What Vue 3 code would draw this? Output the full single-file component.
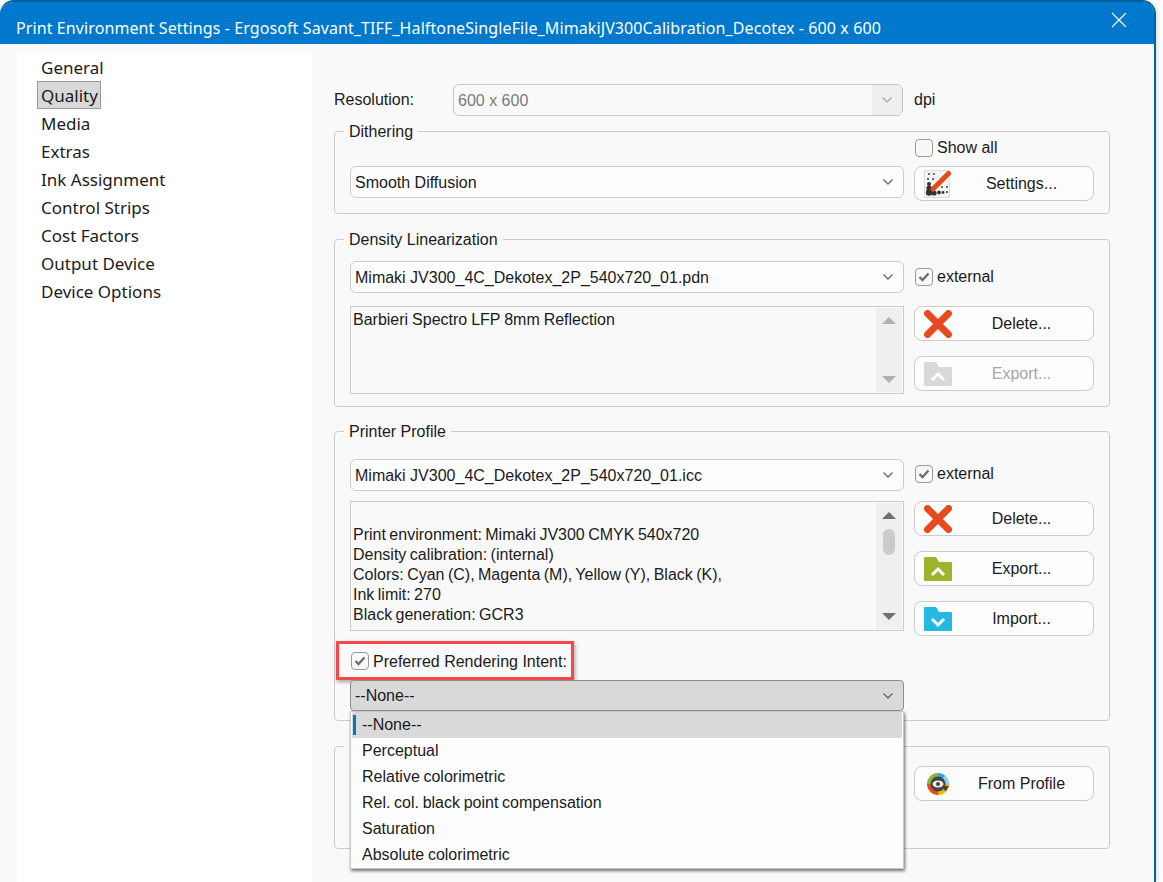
<template>
  <div class="window">
    <header class="titlebar">
      <span class="title">Print Environment Settings - Ergosoft Savant_TIFF_HalftoneSingleFile_MimakiJV300Calibration_Decotex - 600 x 600</span>
      <svg class="close" width="16" height="16" viewBox="0 0 16 16">
        <path d="M1 1l14 14M15 1L1 15" stroke="#fff" stroke-width="1.2" fill="none" />
      </svg>
    </header>

    <div class="body">
      <nav class="sidebar">
        <div v-for="item in navItems" :key="item" class="nav-row">
          <span class="nav-item" :class="{ active: item === 'Quality' }">{{ item }}</span>
        </div>
      </nav>

      <main class="main">
        <div class="resolution-row">
          <span class="res-label">Resolution:</span>
          <div class="select disabled">
            <span class="select-text">600 x 600</span>
            <span class="select-arrow">
              <svg width="12" height="8" viewBox="0 0 12 8"><path d="M1.500 1.500L6 6l4.500-4.500" stroke="#aaa" stroke-width="1.300" fill="none" /></svg>
            </span>
          </div>
          <span class="dpi">dpi</span>
        </div>

        <fieldset class="group group-dither">
          <legend>Dithering</legend>
          <div class="side-col-row show-all">
            <div></div>
            <label class="check"><span class="box"></span>Show all</label>
          </div>
          <div class="side-col-row">
            <div class="select">
              <span class="select-text">Smooth Diffusion</span>
              <span class="select-arrow">
                <svg width="12" height="8" viewBox="0 0 12 8"><path d="M1.500 1.500L6 6l4.500-4.500" stroke="#666" stroke-width="1.300" fill="none" /></svg>
              </span>
            </div>
            <button class="btn">
              <svg class="icon" width="28" height="28" viewBox="0 0 28 28">
                <rect x="0.500" y="0.500" width="25" height="27" fill="#f4f4f4" stroke="#ddd" />
                <g fill="#333">
                  <circle cx="5" cy="4" r="0.900" /><circle cx="10" cy="4" r="0.900" />
                  <circle cx="4" cy="9" r="1" /><circle cx="9" cy="9" r="1" />
                  <circle cx="5" cy="14" r="2" /><circle cx="5" cy="18" r="2.600" />
                  <circle cx="5" cy="22.500" r="3.200" /><circle cx="10" cy="23" r="2.600" />
                  <circle cx="15" cy="22.500" r="1.900" /><circle cx="19" cy="22.500" r="1.400" />
                  <circle cx="23" cy="22" r="1" /><circle cx="23" cy="17" r="0.900" />
                  <circle cx="18" cy="17" r="0.900" />
                </g>
                <path d="M9 19L24.500 3.500" stroke="#e64a19" stroke-width="5" stroke-linecap="round" />
              </svg>
              <span class="btn-text">Settings...</span>
            </button>
          </div>
        </fieldset>

        <fieldset class="group group-density">
          <legend>Density Linearization</legend>
          <div class="side-col-row top-row">
            <div class="select">
              <span class="select-text">Mimaki JV300_4C_Dekotex_2P_540x720_01.pdn</span>
              <span class="select-arrow">
                <svg width="12" height="8" viewBox="0 0 12 8"><path d="M1.500 1.500L6 6l4.500-4.500" stroke="#666" stroke-width="1.300" fill="none" /></svg>
              </span>
            </div>
            <label class="check"><span class="box">
              <svg width="12" height="10" viewBox="0 0 12 10"><path d="M1.500 5L4.500 8L10.500 1.500" stroke="#6e6e6e" stroke-width="2.400" fill="none" /></svg>
            </span>external</label>
          </div>
          <div class="side-col-row">
            <div class="textbox density-box">
              <div class="textbox-text">
                <div class="line">Barbieri Spectro LFP 8mm Reflection</div>
              </div>
              <div class="scrollbar faded">
                <span class="arrow-up"></span>
                <span class="arrow-down"></span>
              </div>
            </div>
            <div class="btn-col">
              <button class="btn">
                <svg class="icon" width="28" height="28" viewBox="0 0 28 28"><path d="M3.500 3.500l21 21M24.500 3.500l-21 21" stroke="#e64a1e" stroke-width="7" stroke-linecap="round" /></svg>
                <span class="btn-text">Delete...</span>
              </button>
              <button class="btn btn-disabled">
                <svg class="icon" width="28" height="24" viewBox="0 0 28 24">
                  <path d="M0 1a1 1 0 0 1 1-1h11l3 5h12a1 1 0 0 1 1 1v17a1 1 0 0 1-1 1H1a1 1 0 0 1-1-1z" fill="#d9d9d9" />
                  <path d="M8 18l6-6 6 6" stroke="#fff" stroke-width="3" fill="none" />
                </svg>
                <span class="btn-text">Export...</span>
              </button>
            </div>
          </div>
        </fieldset>

        <fieldset class="group group-printer">
          <legend>Printer Profile</legend>
          <div class="side-col-row top-row-printer">
            <div class="select">
              <span class="select-text">Mimaki JV300_4C_Dekotex_2P_540x720_01.icc</span>
              <span class="select-arrow">
                <svg width="12" height="8" viewBox="0 0 12 8"><path d="M1.500 1.500L6 6l4.500-4.500" stroke="#666" stroke-width="1.300" fill="none" /></svg>
              </span>
            </div>
            <label class="check check-up"><span class="box">
              <svg width="12" height="10" viewBox="0 0 12 10"><path d="M1.500 5L4.500 8L10.500 1.500" stroke="#6e6e6e" stroke-width="2.400" fill="none" /></svg>
            </span>external</label>
          </div>
          <div class="side-col-row">
            <div class="textbox printer-box">
              <div class="textbox-text">
                <div v-for="(line, i) in profileLines" :key="i" class="line">{{ line }}</div>
              </div>
              <div class="scrollbar">
                <span class="arrow-up"></span>
                <span class="thumb"></span>
                <span class="arrow-down"></span>
              </div>
            </div>
            <div class="btn-col">
              <button class="btn">
                <svg class="icon" width="28" height="28" viewBox="0 0 28 28"><path d="M3.500 3.500l21 21M24.500 3.500l-21 21" stroke="#e64a1e" stroke-width="7" stroke-linecap="round" /></svg>
                <span class="btn-text">Delete...</span>
              </button>
              <button class="btn">
                <svg class="icon" width="28" height="24" viewBox="0 0 28 24">
                  <path d="M0 1a1 1 0 0 1 1-1h11l3 5h12a1 1 0 0 1 1 1v17a1 1 0 0 1-1 1H1a1 1 0 0 1-1-1z" fill="#9db42c" />
                  <path d="M8 18l6-6 6 6" stroke="#fff" stroke-width="3" fill="none" />
                </svg>
                <span class="btn-text">Export...</span>
              </button>
              <button class="btn">
                <svg class="icon" width="28" height="24" viewBox="0 0 28 24">
                  <path d="M0 1a1 1 0 0 1 1-1h11l3 5h12a1 1 0 0 1 1 1v17a1 1 0 0 1-1 1H1a1 1 0 0 1-1-1z" fill="#25b8e0" />
                  <path d="M8 12l6 6 6-6" stroke="#fff" stroke-width="3" fill="none" />
                </svg>
                <span class="btn-text">Import...</span>
              </button>
            </div>
          </div>

          <div class="intent-row">
            <label class="check"><span class="box">
              <svg width="12" height="10" viewBox="0 0 12 10"><path d="M1.500 5L4.500 8L10.500 1.500" stroke="#6e6e6e" stroke-width="2.400" fill="none" /></svg>
            </span><span class="intent-label">Preferred Rendering Intent:</span></label>
            <div class="highlight"></div>
          </div>

          <div class="intent-select-wrap">
            <div class="select open">
              <span class="select-text">--None--</span>
              <span class="select-arrow">
                <svg width="12" height="8" viewBox="0 0 12 8"><path d="M1.500 1.500L6 6l4.500-4.500" stroke="#666" stroke-width="1.300" fill="none" /></svg>
              </span>
            </div>
            <ul class="dropdown">
              <li v-for="(opt, i) in intents" :key="opt" :class="{ current: i === 0 }">{{ opt }}</li>
            </ul>
          </div>
        </fieldset>

        <fieldset class="group group-last">
          <legend>&nbsp;</legend>
          <div class="side-col-row">
            <div></div>
            <button class="btn">
              <svg class="icon profile-icon" width="24" height="24" viewBox="0 0 24 24">
                <path d="M12 12L12 1A11 11 0 0 1 23 12z" fill="#84d4e4" />
                <path d="M12 12L1 12A11 11 0 0 1 12 1z" fill="#8fb339" />
                <path d="M12 12L12 23A11 11 0 0 1 1 12z" fill="#e2501e" />
                <path d="M12 12L23 12A11 11 0 0 1 12 23z" fill="#fbb400" />
                <path d="M12 1A11 11 0 0 1 19 3.500L12 12z" fill="#2ea9d2" />
                <circle cx="12" cy="12" r="7.500" fill="#444" />
                <path d="M18 14h5l-3 5-2-1z" fill="#444" />
                <ellipse cx="12" cy="12" rx="5.500" ry="3.500" fill="#eee" />
                <circle cx="12" cy="12" r="2" fill="#444" />
              </svg>
              <span class="btn-text">From Profile</span>
            </button>
          </div>
        </fieldset>
      </main>
    </div>
  </div>
</template>

<script setup>
const navItems = [
  'General',
  'Quality',
  'Media',
  'Extras',
  'Ink Assignment',
  'Control Strips',
  'Cost Factors',
  'Output Device',
  'Device Options'
];

const profileLines = [
  '',
  'Print environment: Mimaki JV300 CMYK 540x720',
  'Density calibration: (internal)',
  'Colors: Cyan (C), Magenta (M), Yellow (Y), Black (K),',
  'Ink limit: 270',
  'Black generation: GCR3'
];

const intents = [
  '--None--',
  'Perceptual',
  'Relative colorimetric',
  'Rel. col. black point compensation',
  'Saturation',
  'Absolute colorimetric'
];
</script>

<style>
html, body {
  margin: 0;
  background: #fff;
  overflow: hidden;
}
</style>

<style scoped>
.window {
  width: 1156px;
  height: 882px;
  box-sizing: border-box;
  border-right: 2px solid #0063a8;
  border-top: 2px solid #005c9e;
  border-top-left-radius: 14px;
  border-top-right-radius: 14px;
  background: #f9f9f9;
  box-shadow: 2px 0 5px rgba(0, 0, 0, 0.12);
  overflow: hidden;
  font-family: "Liberation Sans", Arial, sans-serif;
  font-size: 16px;
  color: #1b1b1b;
}

.titlebar {
  height: 42px;
  background: #0078cc;
  display: flex;
  justify-content: space-between;
  padding-left: 16px;
  padding-right: 27px;
}

.title {
  font-family: "Noto Sans", sans-serif;
  font-size: 16px;
  letter-spacing: 0.1px;
  line-height: 20px;
  margin-top: 16px;
  color: #fff;
  white-space: nowrap;
}

.close {
  margin-top: 10px;
}

.body {
  display: flex;
  height: 838px;
}

.sidebar {
  margin-top: 9px;
  margin-left: 17px;
  width: 295px;
  background: #fff;
  padding-top: 1px;
  font-family: "Noto Sans", sans-serif;
  font-size: 17px;
}

.nav-row {
  height: 28px;
  padding-left: 20px;
}

.nav-item {
  display: inline-block;
  height: 28px;
  line-height: 26px;
  box-sizing: border-box;
  padding: 0 3px;
  border: 1px solid transparent;
}

.nav-item.active {
  background: #d8d8d8;
  border-color: #999;
  line-height: 28px;
  padding-right: 2px;
  position: relative;
  top: -1px;
}

.main {
  flex: 0 0 776px;
  padding-left: 22px;
  padding-top: 40px;
}

.resolution-row {
  display: flex;
  align-items: center;
  height: 32px;
  width: 620px;
}

.res-label {
  width: 119px;
}

.resolution-row .select {
  width: 450px;
  flex-shrink: 0;
}

.dpi {
  margin-left: 11px;
}

.select {
  height: 32px;
  box-sizing: border-box;
  border: 1px solid #ccc;
  border-radius: 6px;
  background: #fdfdfd;
  display: flex;
  align-items: center;
  justify-content: space-between;
  overflow: hidden;
}

.select-text {
  padding: 2px 0 0 4px;
  white-space: nowrap;
}

.select-arrow {
  width: 30px;
  height: 100%;
  display: flex;
  align-items: center;
  justify-content: center;
}

.select.disabled {
  background: #f9f9f9;
  border-color: #c4c4c4;
}

.select.disabled .select-text {
  color: #7a7a7a;
}

.select.disabled .select-arrow {
  background: #efefef;
}

.select.open {
  height: 31px;
  background: #d9d9d9;
  border-color: #8e8e8e;
  border-radius: 4px;
}

.select.open .select-text {
  padding-top: 0;
}

.group {
  margin: 0;
  box-sizing: border-box;
  width: 776px;
  border: 1px solid #ccc;
  border-radius: 4px;
  padding: 0 15px;
  min-width: 0;
}

.group legend {
  height: 16px;
  line-height: 18px;
  padding: 0 5px;
  margin-left: -6px;
}

.group-dither {
  margin-top: 7px;
  height: 91px;
}

.group-density {
  margin-top: 17px;
  height: 176px;
  padding-top: 14px;
}

.group-printer {
  margin-top: 16px;
  height: 298px;
  padding-top: 20px;
}

.group-last {
  margin-top: 17px;
  height: 111px;
  padding-top: 12px;
}

.side-col-row {
  display: grid;
  grid-template-columns: 554px 180px;
  column-gap: 10px;
  align-items: start;
}

.show-all {
  height: 18px;
  margin-bottom: 9px;
}

.top-row {
  margin-bottom: 13px;
  align-items: center;
}

.top-row-printer {
  margin-bottom: 10px;
  align-items: center;
}

.check {
  display: flex;
  align-items: center;
  gap: 4px;
  height: 18px;
  margin-left: 1px;
  white-space: nowrap;
}

.check-up {
  position: relative;
  top: -1px;
}

.intent-label {
  padding-top: 2px;
}

.box {
  width: 18px;
  height: 18px;
  box-sizing: border-box;
  border: 1px solid #9a9a9a;
  border-radius: 4px;
  background: #f8f8f8;
  display: flex;
  align-items: center;
  justify-content: center;
}

.btn {
  width: 180px;
  height: 35px;
  box-sizing: border-box;
  border: 1px solid #ccc;
  border-radius: 8px;
  background: #fdfdfd;
  padding: 0 0 0 9px;
  display: flex;
  align-items: center;
  font-family: inherit;
  font-size: 16px;
  color: #1b1b1b;
}

.icon {
  flex-shrink: 0;
  margin-right: -2px;
}

.profile-icon {
  margin-left: 2px;
  margin-right: 0;
}

.btn-text {
  flex: 1;
  text-align: center;
}

.btn-disabled {
  color: #a6a6a6;
}

.btn-col {
  display: flex;
  flex-direction: column;
  gap: 15px;
}

.textbox {
  box-sizing: border-box;
  border: 1px solid #ccc;
  display: flex;
  padding: 1px;
}

.density-box {
  height: 88px;
  word-spacing: -0.5px;
}

.printer-box {
  height: 130px;
  word-spacing: -1px;
}

.textbox-text {
  flex: 1;
  padding-left: 1px;
  padding-top: 2px;
}

.line {
  height: 20px;
  line-height: 20px;
  white-space: nowrap;
}

.scrollbar {
  width: 26px;
  background: #efefef;
  position: relative;
}

.arrow-up,
.arrow-down {
  position: absolute;
  left: 6px;
  width: 0;
  height: 0;
  border-left: 7px solid transparent;
  border-right: 7px solid transparent;
}

.arrow-up {
  top: 9px;
  border-bottom: 7px solid #707070;
}

.arrow-down {
  bottom: 9px;
  border-top: 7px solid #707070;
}

.faded .arrow-up {
  border-bottom-color: #b0b0b0;
}

.faded .arrow-down {
  border-top-color: #b0b0b0;
}

.thumb {
  position: absolute;
  left: 7px;
  top: 26px;
  width: 12px;
  height: 26px;
  border-radius: 6px;
  background: #cbcbcb;
}

.intent-row {
  position: relative;
  margin-top: 16px;
  width: 240px;
  height: 18px;
}

.highlight {
  position: absolute;
  left: -14px;
  top: -11px;
  width: 238px;
  height: 39px;
  box-sizing: border-box;
  border: 3px solid #f8474a;
  box-shadow: 1px 2px 4px rgba(0, 0, 0, 0.35);
  pointer-events: none;
}

.intent-select-wrap {
  position: relative;
  width: 554px;
  margin-top: 10px;
  z-index: 2;
}

.dropdown {
  position: absolute;
  top: 31px;
  left: 0;
  right: 0;
  margin: 0;
  padding: 0 1px;
  height: 158px;
  box-sizing: border-box;
  list-style: none;
  background: #fdfdfd;
  border: 1px solid #c8c8c8;
  box-shadow: 1px 2px 3px rgba(0, 0, 0, 0.55);
  word-spacing: -0.8px;
}

.dropdown li {
  height: 26px;
  line-height: 26px;
  padding-left: 10px;
  position: relative;
}

.dropdown li.current {
  background: #d9d9d9;
  border-radius: 2px;
}

.dropdown li.current::before {
  content: "";
  position: absolute;
  left: 1px;
  top: 3px;
  width: 3px;
  height: 20px;
  background: #0078cc;
}
</style>
